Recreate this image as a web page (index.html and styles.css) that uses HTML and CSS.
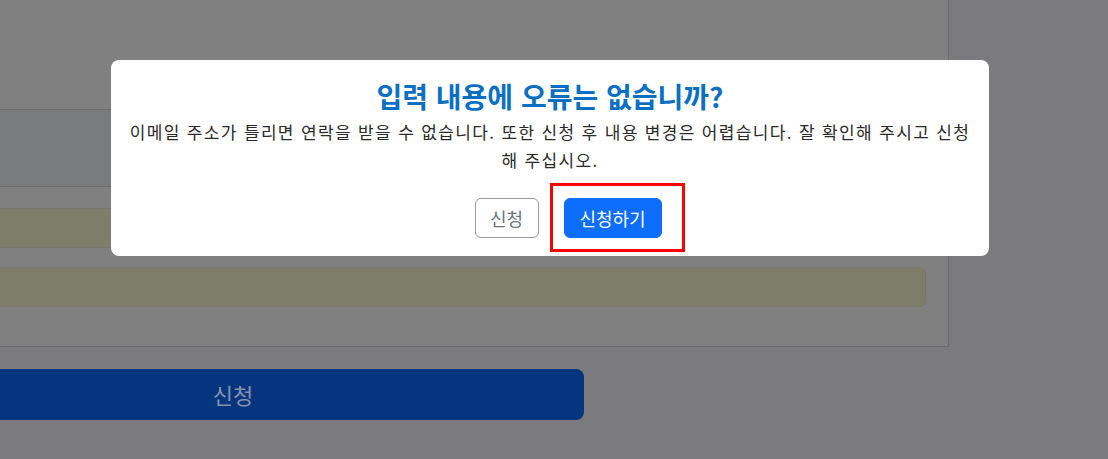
FILE: index.html
```html
<!DOCTYPE html>
<html lang="ko">
<head>
<meta charset="utf-8">
<title>신청 확인</title>
<link rel="stylesheet" href="styles.css">
</head>
<body>
<div class="page">
  <div class="form">
    <div class="row row-top"></div>
    <div class="row row-gray"></div>
    <div class="field field-a"></div>
    <div class="field field-b"></div>
  </div>
  <div class="submit">신청</div>

  <div class="modal">
    <h2 class="modal-title">입력 내용에 오류는 없습니까?</h2>
    <p class="modal-text">이메일 주소가 틀리면 연락을 받을 수 없습니다. 또한 신청 후 내용 변경은 어렵습니다. 잘 확인해 주시고 신청 해 주십시오.</p>
    <div class="modal-actions">
      <button class="btn btn-outline">신청</button>
      <span class="highlight-wrap">
        <button class="btn btn-primary">신청하기</button>
        <span class="highlight"></span>
      </span>
    </div>
  </div>
</div>
</body>
</html>
```

FILE: styles.css
```css
html, body {
  margin: 0;
  padding: 0;
}
body {
  width: 1108px;
  height: 459px;
  overflow: hidden;
  background: #7b7b7d;
  font-family: "Noto Sans CJK KR", "Noto Sans", sans-serif;
}
.page {
  position: relative;
  width: 1108px;
  height: 459px;
}
.form {
  box-sizing: border-box;
  width: 969px;
  margin-left: -20px;
  background: #808080;
  border-right: 1px solid #6d6d6d;
  border-bottom: 1px solid #6d6d6d;
  padding-bottom: 39px;
}
.row-top {
  height: 109px;
  border-bottom: 1px solid #6e6e6e;
}
.row-gray {
  height: 76px;
  background: #7a7b7d;
  border-bottom: 1px solid #6e6e6e;
}
.field {
  box-sizing: border-box;
  height: 40px;
  width: 946px;
  background: #7e7d69;
  border: 1px solid #78786a;
  border-radius: 6px;
}
.field-a {
  margin-top: 21px;
}
.field-b {
  margin-top: 19px;
}
.submit {
  margin-top: 22px;
  margin-left: -118px;
  width: 702px;
  height: 51px;
  background: #06357f;
  border-radius: 8px;
  color: #8592a8;
  font-size: 22px;
  line-height: 51px;
  text-align: center;
}
.modal {
  position: absolute;
  left: 111px;
  top: 60px;
  width: 878px;
  height: 196px;
  box-sizing: border-box;
  background: #fff;
  border-radius: 8px;
  padding: 20px 12px 0;
  text-align: center;
}
.modal-title {
  margin: 0;
  font-size: 28px;
  line-height: 33px;
  font-weight: 700;
  color: #0b70c4;
}
.modal-text {
  margin: 5px 0 0;
  font-size: 17px;
  line-height: 28px;
  letter-spacing: 1.35px;
  color: #2a2a2a;
  word-break: keep-all;
}
.modal-actions {
  margin-top: 24px;
  display: flex;
  justify-content: center;
  align-items: center;
  gap: 25px;
  padding-left: 36px;
}
.btn {
  box-sizing: border-box;
  height: 40px;
  border-radius: 6px;
  font-family: "Noto Sans CJK KR", "Noto Sans", sans-serif;
  font-size: 18px;
  padding: 0;
  cursor: pointer;
}
.btn-outline {
  width: 64px;
  background: #fff;
  border: 1px solid #9a9a9a;
  color: #6c757d;
}
.btn-primary {
  width: 98px;
  background: #0d6efd;
  border: 1px solid #0d6efd;
  color: #fff;
}
.highlight-wrap {
  position: relative;
  display: inline-flex;
}
.highlight {
  position: absolute;
  left: -14px;
  right: -23px;
  top: -15px;
  bottom: -14px;
  border: 3px solid #f00;
  pointer-events: none;
}
```
